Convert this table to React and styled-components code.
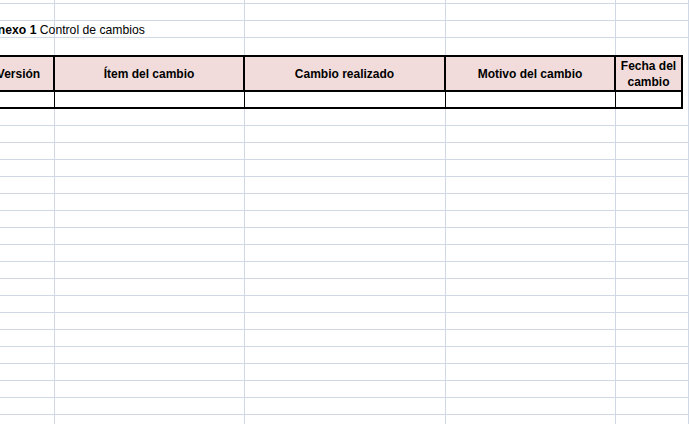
import styled, { createGlobalStyle } from "styled-components"

const GlobalStyle = createGlobalStyle`
  html, body {
    margin: 0;
    padding: 0;
    background: #fff;
    overflow: hidden;
  }
  body {
    font-family: "Liberation Sans", Arial, sans-serif;
    font-size: 12px;
    color: #000;
  }
`

const GRID = "#d0d7e5"
const COLS = "71px 190px 201px 170px 73px"
const TABLE_COLS = "71px 190px 201px 170px 67px 1fr"

const Sheet = styled.div`
  width: 705px;
  height: 424px;
  margin-left: -16px;
  overflow: hidden;
  display: flex;
  flex-direction: column;
`

const Row = styled.div`
  display: grid;
  grid-template-columns: ${COLS};
  height: ${({ $h }) => $h || 17}px;
  flex: none;
`

const Cell = styled.div`
  box-sizing: border-box;
  border-right: 1px solid ${GRID};
  border-bottom: ${({ $noBottom }) => ($noBottom ? "none" : `1px solid ${GRID}`)};
  position: relative;
  overflow: visible;
  white-space: nowrap;
  line-height: 16px;
`

const Caption = styled.span`
  position: absolute;
  left: 5px;
  top: 1px;
  z-index: 1;
  font-size: 12.2px;
  b {
    font-weight: bold;
  }
`

const TableRow = styled.div`
  display: grid;
  grid-template-columns: ${TABLE_COLS};
  height: ${({ $h }) => $h}px;
  flex: none;
`

const HeadCell = styled.div`
  box-sizing: border-box;
  background: #f2dcdb;
  border-top: 2px solid #000;
  border-bottom: 2px solid #000;
  border-right: 2px solid #000;
  display: flex;
  align-items: center;
  justify-content: center;
  text-align: center;
  font-weight: bold;
  line-height: 16px;
  padding: 1px 2px 0;
`

const DataCell = styled.div`
  box-sizing: border-box;
  border-bottom: 2px solid #000;
  border-right: ${({ $last }) => ($last ? "2px" : "1px")} solid #000;
`

const Outside = styled.div`
  box-sizing: border-box;
  border-right: 1px solid ${GRID};
`

const headers = [
  "Versión",
  "Ítem del cambio",
  "Cambio realizado",
  "Motivo del cambio",
  "Fecha del cambio",
]

function BlankRow({ h, noBottom, children }) {
  return (
    <Row $h={h}>
      {[0, 1, 2, 3, 4].map((i) => (
        <Cell key={i} $noBottom={noBottom}>
          {i === 0 && children}
        </Cell>
      ))}
    </Row>
  )
}

export default function App() {
  return (
    <>
      <GlobalStyle />
      <Sheet>
        <BlankRow h={4} />
        <BlankRow />
        <BlankRow>
          <Caption>
            <b>Anexo 1</b> Control de cambios
          </Caption>
        </BlankRow>
        <BlankRow h={17} noBottom />
        <TableRow $h={37}>
          {headers.map((h) => (
            <HeadCell key={h}>
              {h === "Fecha del cambio" ? (
                <span>
                  Fecha del
                  <br />
                  cambio
                </span>
              ) : (
                h
              )}
            </HeadCell>
          ))}
          <Outside />
        </TableRow>
        <TableRow $h={17}>
          {headers.map((h, i) => (
            <DataCell key={h} $last={i === headers.length - 1} />
          ))}
          <Outside />
        </TableRow>
        {Array.from({ length: 20 }, (_, i) => (
          <BlankRow key={i} />
        ))}
      </Sheet>
    </>
  )
}
